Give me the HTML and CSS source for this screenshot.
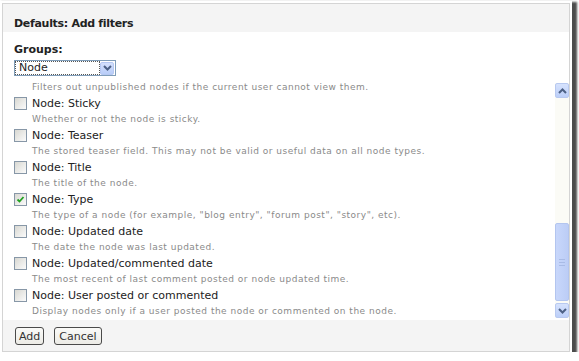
FILE: index.html
```html
<!DOCTYPE html>
<html lang="en">
<head>
  <meta charset="UTF-8">
  <title>Defaults: Add filters</title>
  <link rel="stylesheet" href="styles.css">
</head>
<body>
  <div class="dialog">
    <div class="dlg-head">Defaults: Add filters</div>

    <!-- Groups selector -->
    <div class="groups">
      <div class="groups-label">Groups:</div>
      <div class="select">
        <span class="select-value">Node</span>
        <span class="select-btn">
          <svg width="9" height="6" viewBox="0 0 9 6"><path d="M1 1 L4.5 4.5 L8 1" fill="none" stroke="#4d6185" stroke-width="2"/></svg>
        </span>
      </div>
    </div>

    <!-- Filter list -->
    <div class="list-wrap">
      <div class="list">
        <div class="desc">Filters out unpublished nodes if the current user cannot view them.</div>

        <div class="item"><span class="check"></span>Node: Sticky</div>
        <div class="desc">Whether or not the node is sticky.</div>

        <div class="item"><span class="check"></span>Node: Teaser</div>
        <div class="desc">The stored teaser field. This may not be valid or useful data on all node types.</div>

        <div class="item"><span class="check"></span>Node: Title</div>
        <div class="desc">The title of the node.</div>

        <div class="item"><span class="check checked"><svg width="9" height="9" viewBox="0 0 9 9"><path d="M1.5 4.5 L3.5 6.5 L7.5 2" fill="none" stroke="#21a121" stroke-width="1.8"/></svg></span>Node: Type</div>
        <div class="desc">The type of a node (for example, "blog entry", "forum post", "story", etc).</div>

        <div class="item"><span class="check"></span>Node: Updated date</div>
        <div class="desc">The date the node was last updated.</div>

        <div class="item"><span class="check"></span>Node: Updated/commented date</div>
        <div class="desc">The most recent of last comment posted or node updated time.</div>

        <div class="item"><span class="check"></span>Node: User posted or commented</div>
        <div class="desc">Display nodes only if a user posted the node or commented on the node.</div>
      </div>

      <div class="scrollbar">
        <div class="sb-btn">
          <svg width="9" height="6" viewBox="0 0 9 6"><path d="M1 5 L4.5 1.5 L8 5" fill="none" stroke="#4d6185" stroke-width="2"/></svg>
        </div>
        <div class="sb-track">
          <div class="sb-thumb"><span class="grip"></span></div>
        </div>
        <div class="sb-btn">
          <svg width="9" height="6" viewBox="0 0 9 6"><path d="M1 1 L4.5 4.5 L8 1" fill="none" stroke="#4d6185" stroke-width="2"/></svg>
        </div>
      </div>
    </div>

    <div class="dlg-foot">
      <button>Add</button>
      <button>Cancel</button>
    </div>
  </div>
</body>
</html>
```

FILE: styles.css
```css
/* Reset minimal */
* { box-sizing: border-box; margin: 0; padding: 0; }

body {
  font-family: 'DejaVu Sans', Verdana, sans-serif;
  background: #fff;
  color: #222;
}

/* Dialog frame with screenshot shadow */
.dialog {
  width: 568px;
  height: 349px;
  margin: 3px 0 0 2px;
  border: 1px solid #d4d4d4;
  background: #fff;
  display: flex;
  flex-direction: column;
  box-shadow: 0 0 0 2px #fff, 3px 3px 2px 4px rgba(45,45,45,0.85);
}

.dlg-head {
  height: 28px;
  padding: 12px 11px 0;
  line-height: 16px;
  font-size: 11px;
  font-weight: bold;
  letter-spacing: -0.3px;
  background: #f4f4f4;
}

/* Groups */
.groups {
  padding: 10px 11px 0;
}
.groups-label {
  font-size: 11px;
  font-weight: bold;
  line-height: 16px;
}
.select {
  margin-top: 2px;
  width: 102px;
  height: 16px;
  border: 1px solid #7f9db9;
  display: flex;
  align-items: center;
  justify-content: space-between;
  padding: 0 1px;
}
.select-value {
  flex: 1;
  font-size: 11px;
  line-height: 12px;
  padding-left: 3px;
  outline: 1px dotted #555;
  margin-right: 1px;
}
.select-btn {
  width: 14px;
  height: 13px;
  background: linear-gradient(#d4e0fc, #b9cdf8);
  border: 1px solid #b6c8f2;
  border-radius: 2px;
  display: flex;
  align-items: center;
  justify-content: center;
}

/* Filter list */
.list-wrap {
  margin-top: 4px;
  height: 238px;
  display: flex;
}
.list {
  flex: 1;
  overflow: hidden;
  padding-left: 11px;
}
.item {
  display: flex;
  align-items: center;
  height: 17px;
  font-size: 11px;
}
.check {
  width: 13px;
  height: 13px;
  margin-right: 5px;
  border: 1px solid #8797a7;
  background: linear-gradient(135deg, #d8d8d2, #fbfbfb);
  display: flex;
  align-items: center;
  justify-content: center;
}
.desc {
  height: 15px;
  line-height: 15px;
  padding-left: 18px;
  font-size: 9px;
  letter-spacing: 0.5px;
  color: #8a8a8a;
  white-space: nowrap;
}

/* Scrollbar */
.scrollbar {
  width: 14px;
  margin-top: 3px;
  height: 235px;
  display: flex;
  flex-direction: column;
  background: #fbfbf6;
}
.sb-btn {
  height: 15px;
  background: linear-gradient(#d6e2fd, #bccff8);
  border: 1px solid #b8c9f0;
  border-radius: 2px;
  display: flex;
  align-items: center;
  justify-content: center;
}
.sb-track {
  flex: 1;
  display: flex;
  flex-direction: column;
  justify-content: flex-end;
  padding-bottom: 2px;
}
.sb-thumb {
  height: 78px;
  background: linear-gradient(90deg, #c8d7fb, #bccdf6);
  border: 1px solid #b3c5ef;
  border-radius: 2px;
  display: flex;
  align-items: center;
  justify-content: center;
}
.grip {
  width: 6px;
  height: 7px;
  border-top: 1px solid #a9bbe6;
  border-bottom: 1px solid #a9bbe6;
  background: linear-gradient(#a9bbe6, #a9bbe6) center / 6px 1px no-repeat;
}

/* Footer */
.dlg-foot {
  margin-top: 2px;
  flex: 1;
  background: #f4f4f4;
  padding: 7px 12px 0;
  display: flex;
  align-items: flex-start;
  gap: 10px;
}
button {
  height: 18px;
  padding: 0 3px;
  font-family: 'DejaVu Sans', Verdana, sans-serif;
  font-size: 11px;
  color: #333;
  background: linear-gradient(#fafaf8, #ecebe6);
  border: 1px solid #4a4a4a;
  border-radius: 3px;
}
button + button {
  padding: 0 4px;
}
```
